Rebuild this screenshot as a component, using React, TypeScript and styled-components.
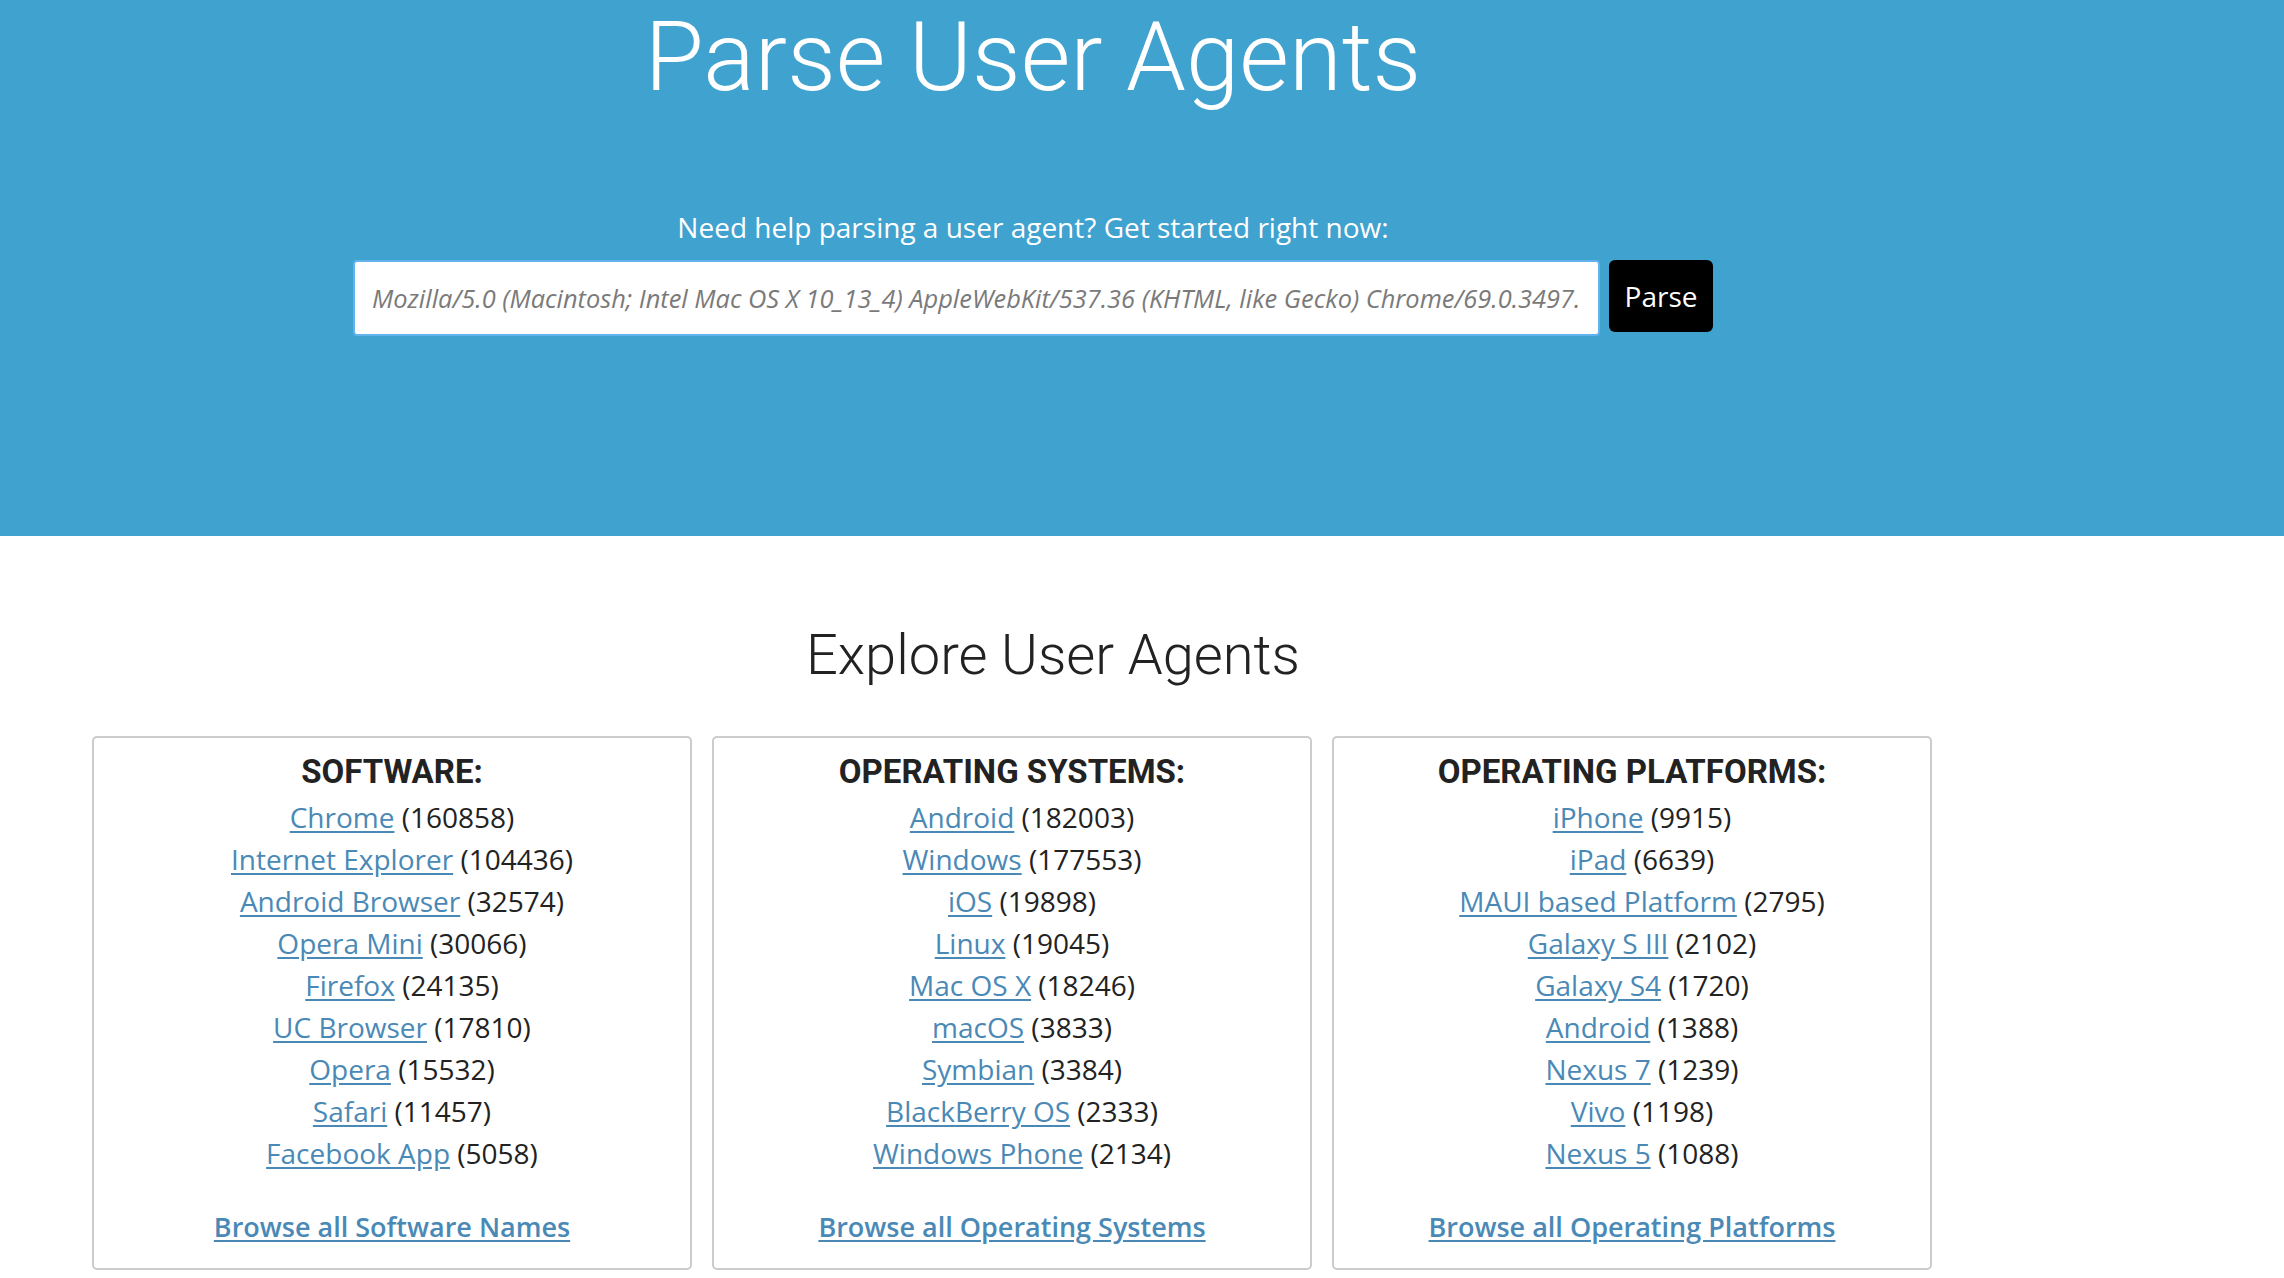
import React, { ReactElement } from 'react';
import styled, { createGlobalStyle } from 'styled-components';

const colors = {
  BLUE: '#3fa2cf',
  LINK: '#4a89b6',
  TEXT: '#222222',
  BORDER: '#cccccc',
};

const GlobalStyle = createGlobalStyle`
  html, body {
    margin: 0;
    padding: 0;
    background: #ffffff;
    font-family: "Open Sans", "Liberation Sans", sans-serif;
    color: ${colors.TEXT};
  }
  * {
    box-sizing: border-box;
  }
`;

const Hero = styled.header`
  background-color: ${colors.BLUE};
  height: 536px;
  width: 100%;
`;

const HeroInner = styled.div`
  width: 2066px;
  display: flex;
  flex-direction: column;
  align-items: center;
`;

const Title = styled.h1`
  margin: 0;
  font-family: Roboto, "Liberation Sans", sans-serif;
  font-weight: 300;
  font-size: 96px;
  line-height: 1.2;
  color: #ffffff;
`;

const Lead = styled.p`
  margin: 91px 0 0;
  font-size: 28px;
  line-height: 1.5;
  color: #ffffff;
`;

const SearchForm = styled.form`
  display: flex;
  align-items: flex-start;
  gap: 9px;
  margin-top: 12px;
`;

const SearchInput = styled.input`
  width: 1247px;
  height: 76px;
  padding: 0 19px 0 17px;
  border: 2px solid #62b2ee;
  border-radius: 4px;
  background: #ffffff;
  font-family: "Open Sans", "Liberation Sans", sans-serif;
  font-size: 25.4px;
  font-style: italic;
  color: #444;
  outline: none;
  &::placeholder {
    color: #7a7a7a;
  }
`;

const ParseButton = styled.button`
  width: 104px;
  height: 72px;
  border: none;
  border-radius: 6px;
  background: #000000;
  color: #ffffff;
  font-family: "Open Sans", "Liberation Sans", sans-serif;
  font-size: 28px;
  cursor: pointer;
`;

const Explore = styled.section`
  padding: 84px 0 0 92px;
`;

const ExploreTitle = styled.h2`
  margin: 0;
  width: 1922px;
  text-align: center;
  font-family: Roboto, "Liberation Sans", sans-serif;
  font-weight: 300;
  font-size: 56px;
  line-height: 1.25;
  color: ${colors.TEXT};
`;

const CardRow = styled.div`
  display: flex;
  gap: 20px;
  margin-top: 46px;
`;

const Card = styled.div`
  width: 600px;
  border: 2px solid ${colors.BORDER};
  border-radius: 5px;
  padding: 14px 10px 20px;
  text-align: center;
`;

const CardTitle = styled.h3`
  margin: 0 0 4px;
  font-family: Roboto, "Liberation Sans", sans-serif;
  font-weight: 700;
  font-size: 33px;
  line-height: 40px;
  color: ${colors.TEXT};
`;

const List = styled.ul`
  list-style: none;
  margin: 0;
  padding: 0 0 0 20px;
`;

const Item = styled.li`
  font-size: 28px;
  line-height: 1.5;
  color: ${colors.TEXT};
`;

const Link = styled.a<{ $bold?: boolean }>`
  color: ${colors.LINK};
  text-decoration: underline;
  text-underline-offset: 3px;
  font-weight: ${(p) => (p.$bold ? 600 : 400)};
`;

const BrowseAll = styled.div`
  margin-top: 32px;
  font-size: 27px;
  line-height: 42px;
`;

type Entry = [string, number];

type Category = {
  title: string;
  items: Entry[];
  browse: string;
};

const categories: Category[] = [
  {
    title: 'SOFTWARE:',
    items: [
      ['Chrome', 160858],
      ['Internet Explorer', 104436],
      ['Android Browser', 32574],
      ['Opera Mini', 30066],
      ['Firefox', 24135],
      ['UC Browser', 17810],
      ['Opera', 15532],
      ['Safari', 11457],
      ['Facebook App', 5058],
    ],
    browse: 'Browse all Software Names',
  },
  {
    title: 'OPERATING SYSTEMS:',
    items: [
      ['Android', 182003],
      ['Windows', 177553],
      ['iOS', 19898],
      ['Linux', 19045],
      ['Mac OS X', 18246],
      ['macOS', 3833],
      ['Symbian', 3384],
      ['BlackBerry OS', 2333],
      ['Windows Phone', 2134],
    ],
    browse: 'Browse all Operating Systems',
  },
  {
    title: 'OPERATING PLATFORMS:',
    items: [
      ['iPhone', 9915],
      ['iPad', 6639],
      ['MAUI based Platform', 2795],
      ['Galaxy S III', 2102],
      ['Galaxy S4', 1720],
      ['Android', 1388],
      ['Nexus 7', 1239],
      ['Vivo', 1198],
      ['Nexus 5', 1088],
    ],
    browse: 'Browse all Operating Platforms',
  },
];

const UA =
  'Mozilla/5.0 (Macintosh; Intel Mac OS X 10_13_4) AppleWebKit/537.36 (KHTML, like Gecko) Chrome/69.0.3497.100 Safari/537.36';

const App = (): ReactElement => {
  return (
    <>
      <GlobalStyle />
      <Hero>
        <HeroInner>
          <Title>Parse User Agents</Title>
          <Lead>Need help parsing a user agent? Get started right now:</Lead>
          <SearchForm onSubmit={(e) => e.preventDefault()}>
            <SearchInput name="ua" placeholder={UA} />
            <ParseButton type="submit">Parse</ParseButton>
          </SearchForm>
        </HeroInner>
      </Hero>
      <Explore>
        <ExploreTitle>Explore User Agents</ExploreTitle>
        <CardRow>
          {categories.map((cat) => (
            <Card key={cat.title}>
              <CardTitle>{cat.title}</CardTitle>
              <List>
                {cat.items.map(([name, count]) => (
                  <Item key={name}>
                    <Link href="#">{name}</Link> ({count})
                  </Item>
                ))}
              </List>
              <BrowseAll>
                <Link href="#" $bold>
                  {cat.browse}
                </Link>
              </BrowseAll>
            </Card>
          ))}
        </CardRow>
      </Explore>
    </>
  );
};

export default App;
